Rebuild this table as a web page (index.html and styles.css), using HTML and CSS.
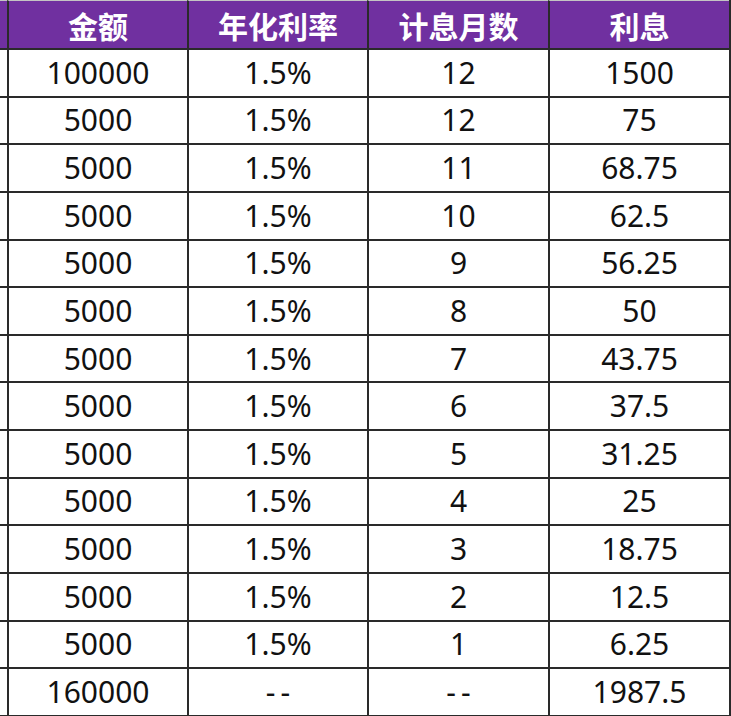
FILE: index.html
```html
<!DOCTYPE html>
<html lang="zh-CN">
<head>
<meta charset="utf-8">
<title>利息计算表</title>
<link rel="stylesheet" href="styles.css">
</head>
<body>
<div class="sheet">
  <div class="c h edge"></div><div class="c h">金额</div><div class="c h">年化利率</div><div class="c h">计息月数</div><div class="c h">利息</div>
  <div class="c edge"></div><div class="c">100000</div><div class="c">1.5%</div><div class="c">12</div><div class="c">1500</div>
  <div class="c edge"></div><div class="c">5000</div><div class="c">1.5%</div><div class="c">12</div><div class="c">75</div>
  <div class="c edge"></div><div class="c">5000</div><div class="c">1.5%</div><div class="c">11</div><div class="c">68.75</div>
  <div class="c edge"></div><div class="c">5000</div><div class="c">1.5%</div><div class="c">10</div><div class="c">62.5</div>
  <div class="c edge"></div><div class="c">5000</div><div class="c">1.5%</div><div class="c">9</div><div class="c">56.25</div>
  <div class="c edge"></div><div class="c">5000</div><div class="c">1.5%</div><div class="c">8</div><div class="c">50</div>
  <div class="c edge"></div><div class="c">5000</div><div class="c">1.5%</div><div class="c">7</div><div class="c">43.75</div>
  <div class="c edge"></div><div class="c">5000</div><div class="c">1.5%</div><div class="c">6</div><div class="c">37.5</div>
  <div class="c edge"></div><div class="c">5000</div><div class="c">1.5%</div><div class="c">5</div><div class="c">31.25</div>
  <div class="c edge"></div><div class="c">5000</div><div class="c">1.5%</div><div class="c">4</div><div class="c">25</div>
  <div class="c edge"></div><div class="c">5000</div><div class="c">1.5%</div><div class="c">3</div><div class="c">18.75</div>
  <div class="c edge"></div><div class="c">5000</div><div class="c">1.5%</div><div class="c">2</div><div class="c">12.5</div>
  <div class="c edge"></div><div class="c">5000</div><div class="c">1.5%</div><div class="c">1</div><div class="c">6.25</div>
  <div class="c edge"></div><div class="c">160000</div><div class="c dash">--</div><div class="c dash">--</div><div class="c">1987.5</div>
</div>
</body>
</html>
```
FILE: styles.css
```css
html, body {
  margin: 0;
  padding: 0;
  background: #ffffff;
}
body {
  width: 731px;
  height: 716px;
  overflow: hidden;
  font-family: "Noto Sans", "Noto Sans CJK SC", sans-serif;
}
.sheet {
  display: grid;
  grid-template-columns: 7px 180px 180px 181px 181px;
  grid-template-rows: 48px repeat(14, 47.64px);
  border-right: 2px solid #2a2a2a;
  border-bottom: 2px solid #2a2a2a;
  width: 729px;
}
.c {
  box-sizing: border-box;
  border-top: 2px solid #2a2a2a;
  border-left: 2px solid #2a2a2a;
  display: flex;
  align-items: center;
  justify-content: center;
  font-size: 30px;
  color: #111111;
  line-height: 1;
  white-space: nowrap;
}
.c.edge {
  border-left: none;
}
.c.dash {
  letter-spacing: 5px;
  padding-left: 5px;
}
.c.h {
  background: #7030a0;
  color: #ffffff;
  font-family: "Noto Sans CJK SC", "Noto Sans", sans-serif;
  font-weight: 700;
  font-size: 30px;
  border-top: 1px solid #c4c4c4;
}
```
